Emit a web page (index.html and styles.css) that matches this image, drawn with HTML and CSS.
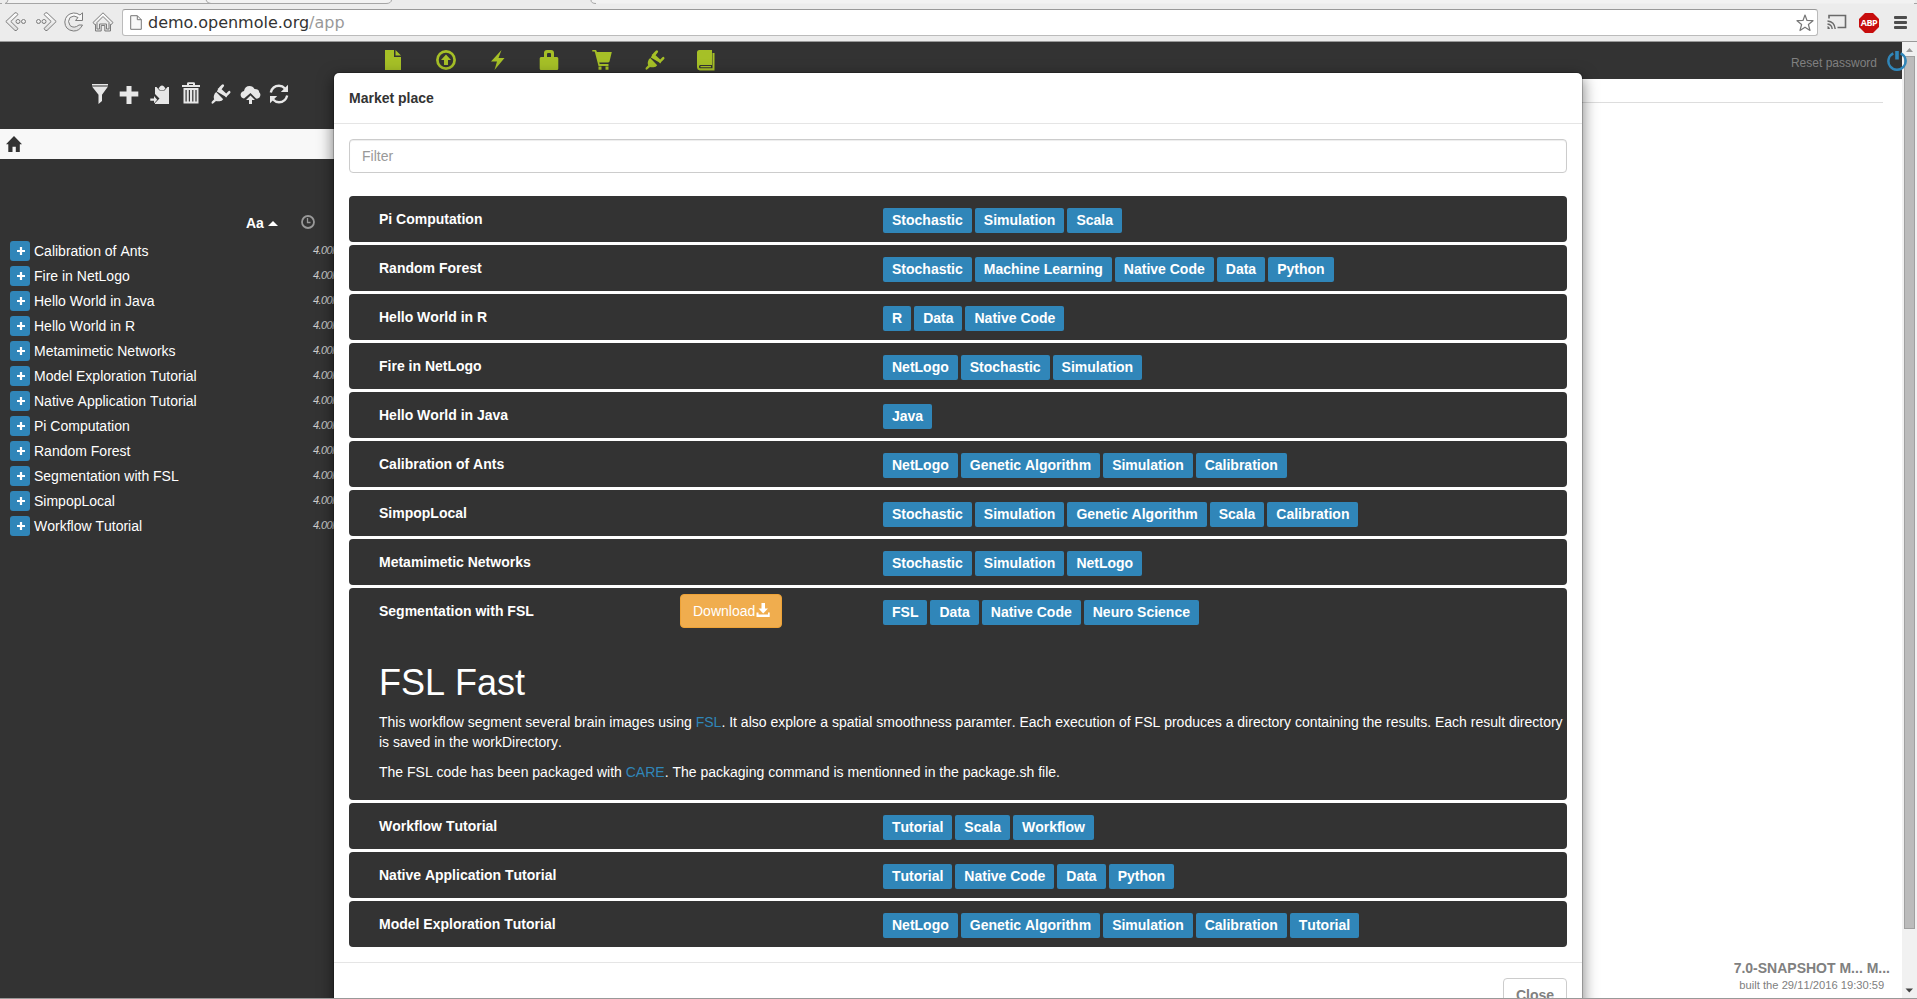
FILE: index.html
```html
<!DOCTYPE html>
<html lang="en">
<head>
<meta charset="utf-8">
<title>OpenMOLE</title>
<link rel="stylesheet" href="styles.css">
</head>
<body>
<svg class="defs" aria-hidden="true">
  <defs>
    <linearGradient id="metal" x1="0" y1="0" x2="0" y2="1"><stop offset="0" stop-color="#fff"/><stop offset="1" stop-color="#ddd"/></linearGradient>
    <symbol id="plug" viewBox="0 0 20 20"><path d="M5.200 8 12.200 15.200Q11 17.200 8.600 17.200 6.500 17.600 5 17L2.400 19.300Q1.200 20.200.7 19.200.3 18.400 1 17.600L3.200 15.200Q2.400 13.500 3 11.500 3.400 9.300 5.200 8ZM6.600 5 7.700 3.900 16.200 12.400 15.100 13.500ZM8.300 3.300 10.800.8Q12.200-.2 12.900 1 13.400 1.900 12.500 2.800L10.600 5.200 15.200 9.600 17.400 7.200Q18.600 6.400 19.300 7.400 19.800 8.400 19 9.300L15.200 13 5.800 7.400Z"/></symbol>
    <symbol id="plus" viewBox="0 0 8 8"><path d="M2.900 0h2.200v2.900H8v2.200H5.100V8H2.900V5.100H0V2.900h2.900z"/></symbol>
  </defs>
</svg>

<header class="browser">
  <svg class="tabs" width="1917" height="5" viewBox="0 0 1917 5" fill="none">
    <path d="M7 0Q6 3 9 3.5H390L391 0ZM593 0H1915V3.5H596Q592 3 591 0Z" fill="#f2f2f2" stroke="none"/>
    <path d="M0 3.500H2M5 3.500Q7.500 3 8 0M5 3.500H386Q391 3.500 391.500 0M206 0Q207 3.500 211 3.500" stroke="#a5a5a5"/>
    <path d="M591 0Q591 3.500 596 3.500M1914 3.500h3" stroke="#a5a5a5"/>
  </svg>
  <div class="nav-buttons">
    <svg width="22" height="20" viewBox="0 0 22 20"><g fill="url(#metal)" stroke="#7c7c7c"><path d="M11.500 .8 13 2.500 5.800 9.500 13 16.500 11.500 18.500 10 18.500 .8 9.500 10 .8Z"/><circle cx="13" cy="9.500" r="2"/><circle cx="18.500" cy="9.500" r="2"/></g></svg>
    <svg width="22" height="20" viewBox="0 0 22 20"><g fill="url(#metal)" stroke="#7c7c7c"><path d="M10.500 .8 9 2.500 16.200 9.500 9 16.500 10.500 18.500 12 18.500 21.200 9.500 12 .8Z"/><circle cx="9" cy="9.500" r="2"/><circle cx="3.500" cy="9.500" r="2"/></g></svg>
    <svg width="20" height="20" viewBox="0 0 20 20"><path d="M18.500.8V8.500H11.500L14 5.500Q10 2.500 6 5.500 3 9.500 6 13.500 10 17 15 13H18.500Q15.500 19.200 9.500 19 1 18 .8 10 1.500 2 9.500 1 13 .8 16 3Z" fill="url(#metal)" stroke="#7c7c7c"/></svg>
    <svg width="22" height="20" viewBox="0 0 22 20"><path d="M11 .8 21 10.500 19 12.800 18.500 12.300V19H12.800V13.500H9.200V19H3.500V12.300L3 12.800 1 10.500ZM11 4.500 5 10.500V17H7.500V12H14.500V17H17V10.500Z" fill="url(#metal)" stroke="#7c7c7c"/></svg>
  </div>
  <div class="url">
    <svg width="12" height="15" viewBox="0 0 12 15"><path d="M.7.7H7.300L11.300 4.700V14.300H.7ZM7.300.7V4.700H11.300" fill="#f8f8f8" stroke="#777"/></svg>
    <span class="address">demo.openmole.org<span class="path">/app</span></span>
    <svg class="star" width="18" height="18" viewBox="0 0 18 18"><path d="M9 1 11 6.500 17 6.700 12.400 10.500 14 16.500 9 13.200 4 16.500 5.600 10.500 1 6.700 7 6.500Z" fill="#fff" stroke="#777" stroke-width="1.200" stroke-linejoin="round"/></svg>
  </div>
  <svg class="cast" width="20" height="16" viewBox="0 0 20 16" fill="none" stroke="#6a6a6a" stroke-width="1.600"><path d="M2 4.500V1.500H18.500V13.500H10.500"/><path d="M.5 7Q7.500 7.500 8.200 15M.5 10Q4.800 10.500 5.200 15" stroke-width="1.400"/><path d="M.5 12Q2.500 12.500 3 15H.5Z" fill="#6a6a6a" stroke="none"/></svg>
  <div class="abp"><span>ABP</span></div>
  <div class="menu"><i></i><i></i><i></i></div>
</header>

<main class="viewport">
  <div class="page">
    <div class="topbar">
      <nav class="topnav">
        <svg width="20" height="20" viewBox="0 0 20 20"><path d="M2 0H11V7H18V20H2ZM12.500 0 18 5.500H12.500Z"/></svg>
        <svg width="20" height="20" viewBox="0 0 20 20"><circle cx="10" cy="10" r="8.600" fill="none" stroke="#a6c027" stroke-width="2.700"/><path d="M10 4.600 15 10H12V15H8V10H5Z"/></svg>
        <svg width="20" height="20" viewBox="0 0 20 20"><path d="M13.500 0 10.500 8H16.500L6.500 20 9 11.500H3Z"/></svg>
        <svg width="20" height="20" viewBox="0 0 20 20"><path d="M5 7V3Q5 0 8 0H12Q15 0 15 3V7H18Q19.300 7 19.300 8.500V18.500Q19.300 20 18 20H2Q.7 20 .7 18.500V8.500Q.7 7 2 7ZM8 7H12V4.200Q12 3 11 3H9Q8 3 8 4.200Z"/></svg>
        <svg width="20" height="20" viewBox="0 0 20 20"><path d="M.3 0H4L5 2H19.800L17.500 11.500Q17 12.500 16 12.500H7.200L7.700 14H16.500V16H6.500L3 2.500 2.600 1.500H.3Z"/><path d="M6.500 16.500h3v3.200h-3zM13.500 16.500h3v3.200h-3z"/></svg>
        <svg width="20" height="20"><use href="#plug"/></svg>
        <svg width="20" height="21" viewBox="0 0 20 21"><path d="M3 0H16V15H4Q2.500 16 3 17.200 3.300 18 4 18.200H16.500V3H18.500V20.500H4Q1 20 1 17V2Q1 .5 3 0ZM4.500 16H15V17.200H4.500Z"/></svg>
      </nav>
      <a class="reset">Reset password</a>
    </div>
    <div class="columns">
      <aside class="sidebar">
        <div class="tools">
          <svg width="20" height="20" viewBox="0 0 20 20"><path d="M2 0H18V1.400H2ZM2 2.500H18L12 10.800V17L8.500 20V10.800Z"/></svg>
          <svg width="20" height="20" viewBox="0 0 20 20"><path d="M7.500 2H12.500V7.500H19.300V12.500H12.500V20H7.500V12.500H.7V7.500H7.500Z"/></svg>
          <svg width="20" height="20" viewBox="0 0 20 20"><path d="M5 3H6.500L9.500 6.500H14.500L17.500 3H19V20H5V19L9.500 14.500 5 10ZM8.500 4.500 10 2.500Q12 .3 14 2.500L15.500 4.500 14 6H10ZM.3 14.500H4V12L7.200 15.800 4 19.200V16.800H.3Z"/></svg>
          <svg width="20" height="22" viewBox="0 0 20 22"><path d="M6 3V1.500Q6 .3 7.500 .3H12.500Q14 .3 14 1.500V3H19V5H1V3ZM8 3H12V2H8ZM2.500 6H17.500V21.500H2.500ZM4.500 8V19.500H5.700V8ZM7.800 8V19.500H9V8ZM11.200 8V19.500H12.400V8ZM14.400 8V19.500H15.600V8Z" fill-rule="evenodd"/></svg>
          <svg width="20" height="20"><use href="#plug"/></svg>
          <svg width="21" height="20" viewBox="0 0 21 20"><path d="M4 14.500Q.5 13.500.6 10.500 1 7.500 4 7 5 2 9.500 2 13 2 14.500 5 19 5 19.200 8.200 21.500 10.500 19.500 13.500 18 15 16 14.500L10.500 9ZM10.500 11.500 15 16H12V20H9V16H6Z"/></svg>
          <svg width="20" height="20" viewBox="0 0 20 20"><path d="M1.800 8.500Q3.500 1.800 10 1.800 13.500 1.800 16 4.500M18.200 11.500Q16.500 18.200 10 18.200 6.500 18.200 4 15.500" fill="none" stroke="#e7e7e7" stroke-width="2.400"/><path d="M19 .8V8H11.800ZM1 19.200V12H8.200Z"/></svg>
        </div>
        <div class="crumbs">
          <svg width="16" height="16" viewBox="0 0 16 16"><path d="M8 0 16 8.300H13.800V16H9.800V10.800H6.500V16H2.300V8.300H0Z"/></svg>
        </div>
        <div class="sort">
          <b>Aa</b><i class="caret"></i>
          <svg width="14" height="14" viewBox="0 0 14 14" fill="none" stroke="#999"><circle cx="7" cy="7" r="6" stroke-width="1.800"/><path d="M6.500 3V7.500H9.500" stroke-width="1.300"/></svg>
        </div>
        <ul class="files">
          <li><span class="add"><svg width="8" height="8"><use href="#plus"/></svg></span><span>Calibration of Ants</span><em>4.00KB</em></li>
          <li><span class="add"><svg width="8" height="8"><use href="#plus"/></svg></span><span>Fire in NetLogo</span><em>4.00KB</em></li>
          <li><span class="add"><svg width="8" height="8"><use href="#plus"/></svg></span><span>Hello World in Java</span><em>4.00KB</em></li>
          <li><span class="add"><svg width="8" height="8"><use href="#plus"/></svg></span><span>Hello World in R</span><em>4.00KB</em></li>
          <li><span class="add"><svg width="8" height="8"><use href="#plus"/></svg></span><span>Metamimetic Networks</span><em>4.00KB</em></li>
          <li><span class="add"><svg width="8" height="8"><use href="#plus"/></svg></span><span>Model Exploration Tutorial</span><em>4.00KB</em></li>
          <li><span class="add"><svg width="8" height="8"><use href="#plus"/></svg></span><span>Native Application Tutorial</span><em>4.00KB</em></li>
          <li><span class="add"><svg width="8" height="8"><use href="#plus"/></svg></span><span>Pi Computation</span><em>4.00KB</em></li>
          <li><span class="add"><svg width="8" height="8"><use href="#plus"/></svg></span><span>Random Forest</span><em>4.00KB</em></li>
          <li><span class="add"><svg width="8" height="8"><use href="#plus"/></svg></span><span>Segmentation with FSL</span><em>4.00KB</em></li>
          <li><span class="add"><svg width="8" height="8"><use href="#plus"/></svg></span><span>SimpopLocal</span><em>4.00KB</em></li>
          <li><span class="add"><svg width="8" height="8"><use href="#plus"/></svg></span><span>Workflow Tutorial</span><em>4.00KB</em></li>
        </ul>
      </aside>
      <section class="content">
        <hr>
        <footer class="version"><b>7.0-SNAPSHOT M... M...</b><small>built the 29/11/2016 19:30:59</small></footer>
      </section>
    </div>

    <div class="modal">
      <div class="modal-header">Market place</div>
      <div class="modal-body">
        <input class="filter" type="text" placeholder="Filter">
        <div class="cards">
          <article class="card"><h4>Pi Computation</h4><div class="tags"><span>Stochastic</span><span>Simulation</span><span>Scala</span></div></article>
          <article class="card"><h4>Random Forest</h4><div class="tags"><span>Stochastic</span><span>Machine Learning</span><span>Native Code</span><span>Data</span><span>Python</span></div></article>
          <article class="card"><h4>Hello World in R</h4><div class="tags"><span>R</span><span>Data</span><span>Native Code</span></div></article>
          <article class="card"><h4>Fire in NetLogo</h4><div class="tags"><span>NetLogo</span><span>Stochastic</span><span>Simulation</span></div></article>
          <article class="card"><h4>Hello World in Java</h4><div class="tags"><span>Java</span></div></article>
          <article class="card"><h4>Calibration of Ants</h4><div class="tags"><span>NetLogo</span><span>Genetic Algorithm</span><span>Simulation</span><span>Calibration</span></div></article>
          <article class="card"><h4>SimpopLocal</h4><div class="tags"><span>Stochastic</span><span>Simulation</span><span>Genetic Algorithm</span><span>Scala</span><span>Calibration</span></div></article>
          <article class="card"><h4>Metamimetic Networks</h4><div class="tags"><span>Stochastic</span><span>Simulation</span><span>NetLogo</span></div></article>
          <article class="card open">
            <h4>Segmentation with FSL</h4>
            <button class="download">Download<svg width="14" height="14" viewBox="0 0 14 14"><path d="M5.500 0H9V5.500H12L7.200 10.500 2.500 5.500H5.500ZM.5 9.500H2.500V11.500H12V9.500H13.700V14H.5Z"/></svg></button>
            <div class="tags"><span>FSL</span><span>Data</span><span>Native Code</span><span>Neuro Science</span></div>
            <div class="readme">
              <h1>FSL Fast</h1>
              <p>This workflow segment several brain images using <a>FSL</a>. It also explore a spatial smoothness paramter. Each execution of FSL produces a directory containing the results. Each result directory is saved in the workDirectory.</p>
              <p>The FSL code has been packaged with <a>CARE</a>. The packaging command is mentionned in the package.sh file.</p>
            </div>
          </article>
          <article class="card"><h4>Workflow Tutorial</h4><div class="tags"><span>Tutorial</span><span>Scala</span><span>Workflow</span></div></article>
          <article class="card"><h4>Native Application Tutorial</h4><div class="tags"><span>Tutorial</span><span>Native Code</span><span>Data</span><span>Python</span></div></article>
          <article class="card"><h4>Model Exploration Tutorial</h4><div class="tags"><span>NetLogo</span><span>Genetic Algorithm</span><span>Simulation</span><span>Calibration</span><span>Tutorial</span></div></article>
        </div>
      </div>
      <div class="modal-footer"><button class="close">Close</button></div>
    </div>
  </div>
  <div class="scrollbar">
    <svg width="15" height="14" viewBox="0 0 15 14"><path d="M4 10 7.500 6 11 10Z" fill="#999"/></svg>
    <div class="thumb"></div>
    <svg width="15" height="14" viewBox="0 0 15 14"><path d="M3.500 4.500H11L7.250 8.500Z" fill="#444"/></svg>
  </div>
  <svg class="power" width="20" height="20" viewBox="0 0 20 20"><path d="M6.300 2.400A8.600 8.600 0 1 0 13.700 2.400" fill="none" stroke="#3086b9" stroke-width="2.500"/><path d="M8.200 0h3.600v8.500H8.200z" fill="#3086b9"/></svg>
</main>
</body>
</html>
```
FILE: styles.css
```css
* { box-sizing: border-box; }
body {
  margin: 0;
  width: 1917px;
  height: 999px;
  overflow: hidden;
  display: flex;
  flex-direction: column;
  font: 14px/20px "Liberation Sans", Arial, sans-serif;
  font-kerning: none;
  color: #333;
  background: #fff;
}
button, input { font-kerning: none; }
svg { display: block; flex: none; }
.defs { position: absolute; width: 0; height: 0; }

/* Browser frame */
.browser {
  position: relative;
  flex: none;
  height: 42px;
  display: flex;
  align-items: flex-start;
  background: #ececec;
  border-bottom: 1px solid #999;
}
.tabs { position: absolute; top: 0; left: 0; }
.nav-buttons { display: flex; width: 122px; padding: 12px 0 0 5px; }
.nav-buttons svg:nth-child(2) { margin-left: 8px; }
.nav-buttons svg:nth-child(3) { margin-left: 7px; }
.nav-buttons svg:nth-child(4) { margin-left: 8px; }
.url {
  display: flex;
  align-items: center;
  width: 1696px;
  height: 27px;
  margin-top: 9px;
  padding: 0 3px 0 7px;
  background: #fff;
  border: 1px solid #bbb;
  border-top-color: #999;
  border-radius: 3px;
}
.address { margin-left: 6px; font: 16px/20px "DejaVu Sans", sans-serif; color: #333; }
.path { color: #999; }
.star { margin-left: auto; }
.cast { margin: 14px 0 0 9px; }
.abp {
  width: 20px;
  height: 20px;
  margin: 13px 0 0 12px;
  background: #c70d0d;
  clip-path: polygon(30% 0, 70% 0, 100% 30%, 100% 70%, 70% 100%, 30% 100%, 0 70%, 0 30%);
  display: flex;
  justify-content: center;
}
.abp span { font: bold 9px/20px "Open Sans", sans-serif; letter-spacing: -.5px; color: #fff; }
.menu { width: 13px; margin: 16px 0 0 15px; display: flex; flex-direction: column; gap: 2px; }
.menu i { height: 3px; background: #4d4d4d; border-radius: 1px; }

.viewport {
  position: relative;
  flex: 1;
  min-height: 0;
  display: flex;
  border-bottom: 1px solid #999;
}
.page { position: relative; width: 1902px; overflow: hidden; display: flex; flex-direction: column; }
.topbar {
  flex: none;
  height: 37px;
  padding: 8px 25px 0 383px;
  display: flex;
  justify-content: space-between;
  background: #333;
}
.topnav { display: flex; gap: 32px; fill: #a6c027; }
.topnav svg:nth-child(2), .topnav svg:nth-child(5), .topnav svg:nth-child(6) { margin-left: 1px; }
.topnav svg:nth-child(4), .topnav svg:nth-child(7) { margin-left: -1px; }
.reset { margin-top: 3px; font-size: 12px; line-height: 20px; color: #808080; }
.columns { flex: 1; display: flex; min-height: 0; }

.sidebar { width: 350px; background: #333; color: #fff; }
.tools { height: 50px; padding: 5px 0 0 90px; display: flex; gap: 10px; fill: #e7e7e7; }
.tools svg:nth-child(2), .tools svg:nth-child(6) { margin-left: -1px; }
.tools svg:nth-child(3), .tools svg:nth-child(4) { margin-left: 1px; }
.tools svg:nth-child(4) { margin-top: -2px; }
.tools svg:nth-child(7) { margin-left: -2px; }
.crumbs { height: 30px; padding: 7px 6px; background: #f8f8f8; fill: #333; }
.sort { display: flex; align-items: center; height: 28px; margin: 49px 0 5px 246px; }
.sort b { margin-top: 1px; }
.caret { margin: 3px 23px 0 4px; border: 5px solid transparent; border-top: 0; border-bottom: 5px solid #fff; }
.files { list-style: none; margin: 0; padding: 0 0 0 10px; }
.files li { display: flex; height: 20px; margin-bottom: 5px; line-height: 20px; }
.add {
  width: 20px;
  height: 20px;
  margin-right: 4px;
  padding: 6px 0 0 7px;
  background: #3086b9;
  border-radius: 3px;
  fill: #fff;
}
.files em { width: 37px; margin-left: auto; margin-top: -1px; font-size: 11px; letter-spacing: -.6px; color: #ccc; }

.content { flex: 1; display: flex; flex-direction: column; justify-content: space-between; padding: 23px 6px 6px 0; }
.content hr { width: 1533px; margin: 0; border: 0; border-top: 1px solid #ddd; }
.version { align-self: flex-end; margin-right: 6px; text-align: center; color: #808080; }
.version b, .version small { display: block; }
.version small { font-size: 11.2px; line-height: 14px; }

/* Market place dialog */
.modal {
  position: absolute;
  left: 333px;
  top: 30px;
  width: 1250px;
  height: 1010px;
  background: #fff;
  background-clip: padding-box;
  border: 1px solid rgba(0, 0, 0, .2);
  border-radius: 6px;
  box-shadow: 0 5px 15px rgba(0, 0, 0, .5);
}
.modal-header { padding: 15px; height: 51px; font-weight: bold; border-bottom: 1px solid #e5e5e5; }
.modal-body { padding: 15px; }
.filter {
  display: block;
  width: 100%;
  height: 34px;
  padding: 6px 12px;
  font: inherit;
  border: 1px solid #ccc;
  border-radius: 4px;
  box-shadow: inset 0 1px 1px rgba(0, 0, 0, .075);
}
.filter::placeholder { color: #999; opacity: 1; }
.cards { display: flex; flex-direction: column; gap: 3px; margin-top: 23px; }
.card {
  display: grid;
  grid-template-columns: 301px 203px 1fr;
  align-items: start;
  min-height: 46px;
  padding-left: 30px;
  background: #333;
  border-radius: 4px;
  color: #fff;
}
.card h4 { margin: 13px 0 0; font-size: 14px; line-height: 20px; }
.tags { grid-column: 3; display: flex; gap: 3px; margin-top: 12px; }
.tags span { height: 25px; padding: 0 9px; font-weight: bold; line-height: 25px; background: #3086b9; border-radius: 2px; }
.open { height: 212px; grid-template-rows: 75px auto; }
.download {
  display: flex;
  align-items: center;
  justify-self: start;
  width: 102px;
  height: 34px;
  margin: 6px 0 0;
  padding: 0 12px;
  font: inherit;
  color: #fff;
  fill: #fff;
  background: #f0ad4e;
  border: 1px solid #eea236;
  border-radius: 4px;
}
.download svg { margin: -2px 0 0 1px; }
.readme { grid-column: 1 / -1; }
.readme h1 { margin: 0 0 9px; font-size: 36px; line-height: 40px; font-weight: normal; }
.readme p { margin: 0 0 10px; }
.readme a { color: #3086b9; }
.modal-footer { display: flex; justify-content: flex-end; padding: 15px; border-top: 1px solid #e5e5e5; }
.close {
  width: 64px;
  height: 34px;
  padding: 0;
  font: bold 14px/20px "Liberation Sans", Arial, sans-serif;
  color: #808080;
  background: #fff;
  border: 1px solid #ccc;
  border-radius: 4px;
}

.scrollbar { width: 15px; display: flex; flex-direction: column; background: #f1f1f1; }
.thumb { width: 11px; height: 873px; margin: 0 0 55px 2px; background: #bbb; border: 1px solid #a0a0a0; }
.power { position: absolute; left: 1887px; top: 9px; }
```
